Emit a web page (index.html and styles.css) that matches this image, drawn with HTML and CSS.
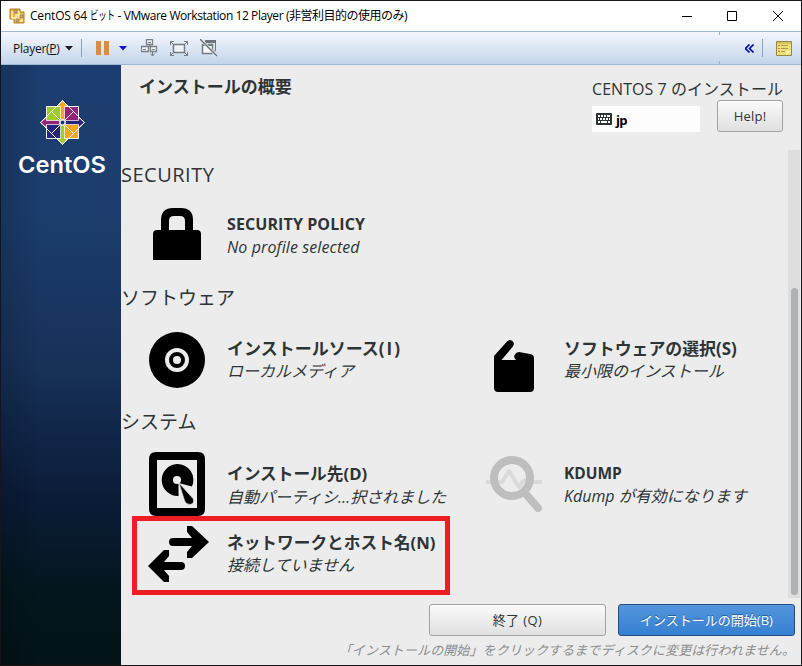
FILE: index.html
```html
<!DOCTYPE html>
<html lang="ja">
	<head>
		<meta charset="utf-8">
		<title>CentOS 64 ビット - VMware Workstation 12 Player</title>
		<link rel="stylesheet" href="styles.css">
	</head>
	<body>
		<div class="window">
			<!-- title bar -->
			<div class="titlebar">
				<svg class="app-icon" width="17" height="17" viewBox="0 0 17 17">
					<path d="M1 1h10v3h4v11H5v-4H1z" fill="#f3b73d" stroke="#b87a1b"/>
					<path d="M3 4h7v6H3zM7 7h6v6H7z" fill="none" stroke="#fff2bd" stroke-width="1.4"/>
					<path d="M5 2h3v3H5zM11 7h3v3h-3zM7 11h3v3H7z" fill="#efb23a" stroke="#7d776d" stroke-width=".8"/>
				</svg>
				<span class="app-title">CentOS 64 <span class="narrow">ビット</span><span class="t-mid"> - VMware Workstation 12 Player</span> <span class="t-end">(非営利目的の使用のみ)</span></span>
				<svg class="win-buttons" width="102" height="12" viewBox="0 0 102 12" fill="none" stroke="#000">
					<path d="M0 6.5h10"/>
					<path d="M45.500 1.500h9v9h-9z"/>
					<path d="M91 1l10 10M101 1L91 11"/>
				</svg>
			</div>

			<!-- toolbar -->
			<div class="toolbar">
				<span class="menu">Player(<u>P</u>)</span>
				<svg class="arrow" width="8" height="5"><path d="M0 0h8L4 4.500z" fill="#1d1d1d"/></svg>
				<i class="sep"></i>
				<svg class="pause" width="13" height="14"><path d="M0 0h5v14H0zM8 0h5v14H8z" fill="#d0924b"/></svg>
				<svg class="blue-arrow" width="8" height="5"><path d="M0 0h8L4 4.500z" fill="#1212c8"/></svg>
				<svg class="tool-keys" width="17" height="18" viewBox="0 0 17 18" fill="#f3f7fc" stroke="#7b7f86">
					<path d="M5.500.5h6v5h-6zM.5 7.500h7v5h-7zM9.500 7.500h6v5h-6z" stroke-width="1.300"/>
					<path d="M7 3.500h3M2 10.500h3M11 10.500h3M8.500 6v2M11.500 13v4M9.500 14.500l2 2.500 2-2.500" fill="none"/>
				</svg>
				<svg class="tool-full" width="18" height="15" viewBox="0 0 18 15" fill="none" stroke="#777b82">
					<path d="M3.500 3.500h11v8h-11z" fill="#eef3fa" stroke-width="1.500"/>
					<path d="M.5 4V.5H4M.5.5l3 3M14 .5h3.500V4M17.500.5l-3 3M.5 11v3.500H4M.5 14.500l3-3M14 14.500h3.500V11M17.500 14.500l-3-3"/>
				</svg>
				<svg class="tool-unity" width="18" height="18" viewBox="0 0 18 18">
					<path d="M6 1.500h9.500V12H13" fill="none" stroke="#777b82"/>
					<path d="M5 1h11v3H5z" fill="#6e7279"/>
					<path d="M2.500 5.500h10v9h-10z" fill="#f3f7fc" stroke="#777b82" stroke-width="1.500"/>
					<path d="M2 5h11v2H2z" fill="#777b82"/>
					<path d="M0 0l17 17" stroke="#e8eff8" stroke-width="3"/>
					<path d="M0 0l17 17" stroke="#686c73" stroke-width="1.300"/>
				</svg>
				<i class="notch"></i>
				<svg class="collapse" width="9" height="9" viewBox="0 0 9 9" fill="none" stroke="#0000a8" stroke-width="1.600"><path d="M4.500.5l-4 4 4 4M8.500.5l-4 4 4 4"/></svg>
				<i class="sep"></i>
				<svg class="note" width="16" height="15" viewBox="0 0 16 15">
					<path d="M.5.500h15v14H.5z" fill="#efe079" stroke="#9a8740"/>
					<path d="M1 1h14v2H1z" fill="#d3c35b"/>
					<path d="M5 4.500h7M5 7.500h7M5 10.500h4" stroke="#a59d55"/>
					<path d="M2 4.500h2M2 7.500h2M2 10.500h2" stroke="#d56b4c"/>
					<path d="M10 14l1-4 4 0z" fill="#fff8bf"/>
				</svg>
			</div>

			<div class="screen">
				<!-- left side bar -->
				<div class="sidebar">
					<svg width="120" height="120" viewBox="0 0 120 120">
						<g transform="translate(61.500 57.500)" stroke="#fff">
							<path d="M-16-16H-1V-1H-16z" fill="#9ccd2a"/>
							<path d="M1-16H16V-1H1z" fill="#932279"/>
							<path d="M1 1H16V16H1z" fill="#efa724"/>
							<path d="M-16 1H-1V16H-16z" fill="#262577"/>
							<path d="M0-22L-5-16H-2V-3H2V-16H5z" fill="#efa724" stroke-width=".7"/>
							<path d="M22 0L16-5V-2H3V2H16V5z" fill="#262577" stroke-width=".7"/>
							<path d="M0 22L-5 16H-2V3H2V16H5z" fill="#9ccd2a" stroke-width=".7"/>
							<path d="M-22 0L-16-5V-2H-3V2H-16V5z" fill="#932279" stroke-width=".7"/>
							<path d="M0-22L11-11 0 0-11-11zM22 0L11 11 0 0 11-11zM0 22L-11 11 0 0 11 11zM-22 0L-11-11 0 0-11 11z" fill="none"/>
							<path d="M-2-2h4v4h-4z" fill="#1c3a6c" stroke-width=".6"/>
						</g>
						<text class="logo-text" x="17" y="108" textLength="88" lengthAdjust="spacingAndGlyphs">CentOS</text>
					</svg>
				</div>

				<div class="main">
					<div class="header">
						<h1>インストールの概要</h1>
						<div class="header-right">
							<div class="product">CENTOS 7 のインストール</div>
							<div class="header-tools">
								<div class="layout">
									<svg width="16" height="12" viewBox="0 0 16 12">
										<rect width="16" height="12" rx="1" fill="#2e3436"/>
										<path d="M2 3h2M5 3h2M8 3h2M11 3h3M2 6h1M4 6h2M7 6h2M10 6h2M13 6h1M2 9h2M5 9h6M12 9h2" stroke="#fff" stroke-width="1.800"/>
									</svg>
									<b>jp</b>
								</div>
								<button class="help">Help!</button>
							</div>
						</div>
					</div>

					<div class="scroll">
						<div class="hub">
							<h2 class="en">SECURITY</h2>
							<div class="row">
								<div class="spoke">
									<svg class="icon" viewBox="0 0 64 64">
										<path d="M8 32q0-4 4-4h4V18q0-12 12-12h8q12 0 12 12v10h4q4 0 4 4v26H8zM24 28h16V19q0-5-5-5h-6q-5 0-5 5z"/>
									</svg>
									<div class="info">
										<b class="policy">SECURITY POLICY</b>
										<em class="profile">No profile selected</em>
									</div>
								</div>
							</div>

							<h2>ソフトウェア</h2>
							<div class="row">
								<div class="spoke tight">
									<svg class="icon" viewBox="0 0 64 64">
										<circle cx="32" cy="32" r="28"/>
										<circle cx="32" cy="32" r="10" fill="none" stroke="#ececec" stroke-width="4"/>
										<circle cx="32" cy="32" r="4" fill="#ececec"/>
									</svg>
									<div class="info">
										<b class="source">インストールソース<span class="key">(I)</span></b>
										<em>ローカルメディア</em>
									</div>
								</div>
								<div class="spoke tight">
									<svg class="icon" viewBox="0 0 64 64">
										<path d="M12 34V28L25 13.500Q28 10.500 31 13.500Q33 16 30.500 19L19.500 32H34Q31 29 33 26.500Q34 24 37 24L48 26Q52 26.500 52 30V60q0 4-4 4H16q-4 0-4-4z"/>
									</svg>
									<div class="info">
										<b class="software">ソフトウェアの選択(S)</b>
										<em>最小限のインストール</em>
									</div>
								</div>
							</div>

							<h2>システム</h2>
							<div class="row">
								<div class="spoke">
									<svg class="icon" viewBox="0 0 64 64">
										<path fill-rule="evenodd" d="M11 0h42q7 0 7 7v50q0 7-7 7H11q-7 0-7-7V7q0-7 7-7zM12 8v48h40V8z"/>
										<path d="M32 12a16 16 0 1 0 1.500 32V31L47 34.500A16 16 0 0 0 32 12z"/>
										<circle cx="32" cy="28" r="4" fill="#ececec"/>
										<path d="M34 31L48 46.500q2 5-3 6-4 0-5.500-4z" stroke="#ececec" stroke-width=".6"/>
									</svg>
									<div class="info">
										<b>インストール先(D)</b>
										<em>自動パーティシ…択されました</em>
									</div>
								</div>
								<div class="spoke kdump">
									<svg class="icon" viewBox="0 0 64 64" fill="none" stroke="#bebebe">
										<path d="M4 30H20L27 19 37 35 42 28 46 30H60" stroke="#dadada" stroke-width="4" stroke-linejoin="round"/>
										<circle cx="30" cy="26" r="18" stroke-width="8"/>
										<path d="M43 41L56 56" stroke-width="8" stroke-linecap="round"/>
									</svg>
									<div class="info">
										<b>KDUMP</b>
										<em>Kdump が有効になります</em>
									</div>
								</div>
							</div>
							<div class="row network">
								<div class="spoke tight">
									<svg class="icon" viewBox="0 0 64 64">
										<path d="M28 16H47L42 10V4h5L64 20 47 36h-5V30L47 24H28q-4 0-4-4t4-4z"/>
										<path d="M36 40H19L24 34V28H19L3 44 19 60h5V54L19 48H36q4 0 4-4t-4-4z"/>
									</svg>
									<div class="info">
										<b>ネットワークとホスト名(N)</b>
										<em>接続していません</em>
									</div>
								</div>
								<div class="mark"></div>
							</div>
						</div>
						<div class="scrollbar"><div class="thumb"></div></div>
					</div>

					<div class="footer">
						<div class="buttons">
							<button class="quit">終了 (Q)</button>
							<button class="begin">インストールの開始(B)</button>
						</div>
						<p>「インストールの開始」をクリックするまでディスクに変更は行われません。</p>
					</div>
				</div>
			</div>
		</div>
	</body>
</html>
```

FILE: styles.css
```css
*{
	box-sizing: border-box;
	margin: 0;
	padding: 0;
}
body{
	font-family: "Open Sans", "Noto Sans CJK JP", sans-serif;
	color: #2e3436;
}
svg{
	display: block;
	flex: none;
}
.window{
	width: 802px;
	height: 666px;
	border: 1px solid #17141a;
	overflow: hidden;
	background: #fff;
}

/* title bar */
.titlebar{
	display: flex;
	align-items: center;
	height: 30px;
	padding: 0 17px 0 8px;
	color: #000;
}
.app-title{
	margin: -2px 0 0 4px;
	font-size: 12px;
	letter-spacing: -0.2px;
	white-space: pre;
}
.narrow{
	display: inline-block;
	width: 25px;
	transform: scaleX(0.7);
	transform-origin: left;
}
.t-mid{
	letter-spacing: -0.42px;
}
.t-end{
	letter-spacing: -0.5px;
}
.win-buttons{
	margin-left: auto;
}

/* toolbar */
.toolbar{
	display: flex;
	align-items: center;
	height: 34px;
	padding: 0 9px 0 12px;
	border-top: 1px solid #9db9d8;
	border-bottom: 1px solid #9db9d8;
	background: linear-gradient(#f3f7fc, #dbe6f4 50%, #c3d5ec);
	font-size: 12px;
	color: #111;
}
.menu{
	width: 47px;
	letter-spacing: -0.25px;
}
.arrow{
	margin-left: 5px;
}
.sep{
	width: 1px;
	height: 18px;
	margin-left: 8px;
	background: #83a3c7;
}
.pause{
	margin-left: 14px;
}
.blue-arrow{
	margin-left: 10px;
}
.tool-keys{
	margin-left: 14px;
}
.tool-full{
	margin-left: 12px;
}
.tool-unity{
	margin-left: 12px;
}
.notch{
	align-self: stretch;
	width: 1px;
	margin-left: auto;
	background: linear-gradient(#9db2ca 3px, transparent 3px, transparent 29px, #9db2ca 29px);
}
.collapse{
	margin: 0 0 0 25px;
}
.note{
	margin-left: 13px;
}

.screen{
	display: flex;
	height: 600px;
}
.sidebar{
	width: 120px;
	background: linear-gradient(90deg, rgba(0,0,0,.16), transparent 35%, transparent), linear-gradient(#1c3d6f, #1c3d6d 25%, #173159 50%, #0b1c38 72%, #03161d 88%, #031317);
}
.logo-text{
	font-family: Inter, sans-serif;
	font-size: 23px;
	font-weight: 600;
	fill: #fff;
}
.main{
	width: 680px;
	background: #ececec;
}

/* header */
.header{
	display: flex;
	justify-content: space-between;
	height: 85px;
	padding: 11px 18px 0 18px;
}
h1{
	font-size: 17px;
	line-height: 22px;
	height: 22px;
}
.header-right{
	width: 191px;
}
.product{
	height: 24px;
	line-height: 26px;
	font-size: 16px;
	letter-spacing: 0.05px;
	white-space: nowrap;
}
.header-tools{
	display: flex;
	justify-content: space-between;
}
.layout{
	display: flex;
	align-items: center;
	gap: 4px;
	width: 108px;
	height: 26px;
	margin-top: 6px;
	padding-left: 4px;
	background: #fdfdfd;
	font-size: 13px;
	color: #000;
}
.layout b{
	padding-top: 1px;
	letter-spacing: -0.6px;
}
button{
	border: 1px solid #a1a1a1;
	border-radius: 3px;
	background: linear-gradient(#fafafa, #e0e0e0);
	font-family: inherit;
	font-size: 13px;
	color: #2e3436;
}
.help{
	width: 66px;
	height: 32px;
	letter-spacing: 0.2px;
}

/* hub */
.scroll{
	display: flex;
	height: 448px;
}
.hub{
	width: 667px;
	padding-top: 13px;
}
h2{
	height: 24px;
	line-height: 24px;
	font-size: 19px;
	font-weight: 400;
}
h2.en{
	font-size: 20px;
	line-height: 23px;
	letter-spacing: 0.5px;
}
.row{
	position: relative;
	display: grid;
	grid-template-columns: 337px 1fr;
	height: 64px;
	margin: 18px 0;
}
h2.en + .row{
	margin: 15px 0 20px;
}
.spoke{
	display: flex;
	align-items: center;
	gap: 18px;
	padding-left: 24px;
}
.icon{
	width: 64px;
	height: 64px;
}
.info{
	padding-top: 4px;
	white-space: nowrap;
}
.info b,
.info em{
	display: block;
	height: 23px;
	line-height: 23px;
	font-size: 16px;
}
.info b{
	font-size: 16.7px;
	line-height: 22px;
}
.tight .info{
	padding-top: 2px;
}
.tight .info b{
	height: 21px;
	line-height: 20px;
}
.info .source{
	font-size: 17px;
}
.key{
	letter-spacing: 2px;
}
.info .software{
	font-size: 16.9px;
}
.info .policy{
	font-size: 16px;
	line-height: 23px;
	letter-spacing: 0.1px;
}
.info .profile{
	letter-spacing: 0.1px;
}
.kdump .info{
	padding-top: 1px;
}
.kdump .info b{
	font-size: 15.5px;
}
.network{
	margin-top: -12px;
}
/* red frame over the network entry */
.mark{
	position: absolute;
	left: 11px;
	top: -6px;
	width: 318px;
	height: 79px;
	border: 5px solid #ee1c23;
}
.scrollbar{
	width: 12px;
	padding: 138px 2px 3px 3px;
	background: #dedede;
}
.thumb{
	height: 307px;
	border-radius: 4px;
	background: #b0b1b2;
}

/* footer */
.footer{
	padding: 6px 6px 0 0;
}
.buttons{
	display: flex;
	justify-content: flex-end;
	gap: 12px;
}
.buttons button{
	width: 177px;
	height: 32px;
	padding-bottom: 2px;
}
.buttons .quit{
	letter-spacing: 0.4px;
}
.buttons .begin{
	border-color: #1f4f86;
	background: linear-gradient(#5495dc, #3580d2);
	color: #fff;
	text-shadow: 0 -1px #245b98;
}
.footer p{
	margin-top: 4px;
	text-align: right;
	font-size: 13px;
	letter-spacing: 0.1px;
	line-height: 20px;
	font-style: italic;
	color: #8b8d8e;
	white-space: nowrap;
}
```
